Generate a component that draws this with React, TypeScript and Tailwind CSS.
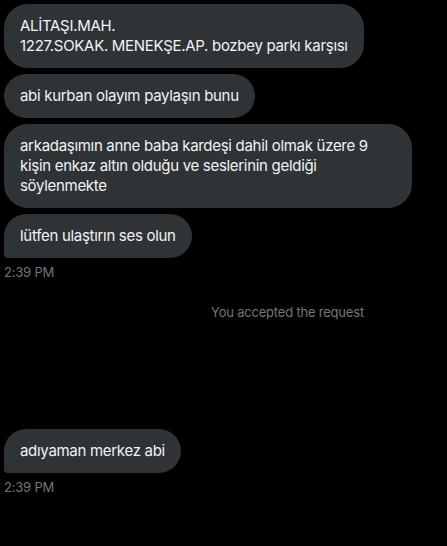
const bubble =
  "w-fit max-w-[408px] rounded-3xl bg-[#2f3336] px-4 py-3 text-[15px] leading-5 tracking-[-0.3px] text-[#f1f3f4]";

export default function App() {
  return (
    <div
      className="h-[546px] w-full overflow-hidden bg-black pl-1 pt-1"
      style={{ fontFamily: "Inter, 'Noto Sans', sans-serif" }}
    >
      <div className="flex flex-col gap-1.5">
        <div className={bubble}>
          ALİTAŞI.MAH.
          <br />
          1227.SOKAK. MENEKŞE.AP. bozbey parkı karşısı
        </div>
        <div className={bubble}>abi kurban olayım paylaşın bunu</div>
        <div className={bubble}>
          arkadaşımın anne baba kardeşi dahil olmak üzere 9 kişin enkaz altın olduğu ve seslerinin geldiği
          söylenmekte
        </div>
        <div className={bubble + " rounded-bl-[4px]"}>lütfen ulaştırın ses olun</div>
      </div>
      <p className="mt-1.5 text-[13px] leading-4 tracking-[-0.2px] text-[#71767b]">2:39 PM</p>

      <p className="mt-[24px] pl-[207px] text-[13px] leading-4 tracking-[-0.2px] text-[#71767b]">
        You accepted the request
      </p>

      <div className="mt-[109px] flex flex-col">
        <div className={bubble + " rounded-bl-[4px]"}>adıyaman merkez abi</div>
      </div>
      <p className="mt-1.5 text-[13px] leading-4 tracking-[-0.2px] text-[#71767b]">2:39 PM</p>
    </div>
  );
}
